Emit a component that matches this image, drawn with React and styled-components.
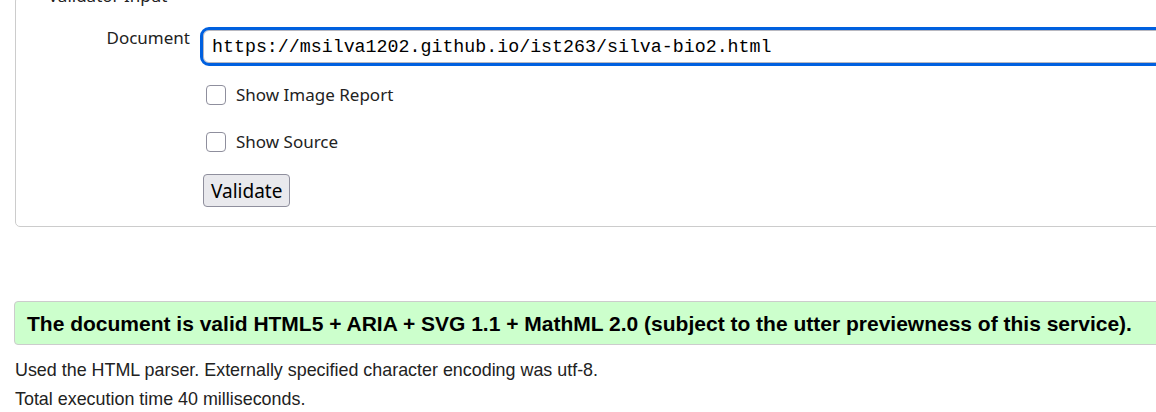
import React from 'react'
import styled, { createGlobalStyle } from 'styled-components'

const GlobalStyle = createGlobalStyle`
  html, body {
    margin: 0;
    padding: 0;
    background: #ffffff;
    overflow: hidden;
  }
`

const Page = styled.div`
  width: 1220px;
  padding-left: 15px;
  margin-top: -14px;
  font-family: 'Liberation Sans', Arial, sans-serif;
  color: #000;
`

const Fieldset = styled.fieldset`
  margin: 0;
  padding: 20px 0 19px 0;
  border: 1px solid #cccccc;
  border-radius: 5px;
`

const Legend = styled.legend`
  margin-left: 30px;
  padding: 0 2px;
  font-family: 'Noto Sans', 'Open Sans', sans-serif;
  font-size: 17px;
  line-height: 20px;
  color: #222;
`

const Row = styled.div`
  display: flex;
  align-items: flex-start;
  gap: 13px;
`

const Label = styled.label`
  width: 174px;
  text-align: right;
  font-family: 'Noto Sans', 'Open Sans', sans-serif;
  font-size: 17px;
  color: #222;
`

const Controls = styled.div`
  flex: 1;
  display: flex;
  flex-direction: column;
  align-items: flex-start;
`

const UrlInput = styled.input`
  box-sizing: border-box;
  width: 100%;
  height: 33px;
  margin-top: 4px;
  padding: 0 8px;
  border: 1px solid #b8b8c0;
  border-radius: 6px;
  outline: 3px solid #0060df;
  font-family: 'Liberation Mono', 'DejaVu Sans Mono', monospace;
  font-size: 18.3px;
  color: #000;
  background: #fff;
`

const CheckRow = styled.label`
  display: flex;
  align-items: center;
  gap: 10px;
  margin-left: 3px;
  margin-top: ${(p) => p.$top}px;
  font-family: 'Noto Sans', 'Open Sans', sans-serif;
  font-size: 17px;
  color: #222;
`

const Box = styled.span`
  display: inline-block;
  box-sizing: border-box;
  width: 20px;
  height: 20px;
  border: 1px solid #8f8f9d;
  border-radius: 4px;
  background: #fff;
`

const Button = styled.button`
  margin-top: 21px;
  height: 33px;
  padding: 0 7px;
  border: 1px solid #8f8f9d;
  border-radius: 4px;
  background: #e9e9ed;
  font-family: 'Noto Sans', 'Open Sans', sans-serif;
  font-size: 19px;
  color: #000;
`

const Success = styled.p`
  margin: 74px 0 0 -1px;
  padding: 10px 12px 8px 12px;
  border: 1px solid #cccccc;
  border-radius: 4px;
  background: #ccffcc;
  font-weight: bold;
  font-size: 21px;
`

const Info = styled.p`
  margin: ${(p) => p.$top}px 0 0 0;
  font-size: 17.9px;
  color: #222;
`

export default function App() {
  return (
    <>
      <GlobalStyle />
      <Page>
        <Fieldset>
          <Legend>Validator Input</Legend>
          <Row>
            <Label>Document</Label>
            <Controls>
              <UrlInput
                defaultValue="https://msilva1202.github.io/ist263/silva-bio2.html"
                readOnly
              />
              <CheckRow $top={20}>
                <Box />
                Show Image Report
              </CheckRow>
              <CheckRow $top={24}>
                <Box />
                Show Source
              </CheckRow>
              <Button>Validate</Button>
            </Controls>
          </Row>
        </Fieldset>
        <Success>
          The document is valid HTML5 + ARIA + SVG 1.1 + MathML 2.0 (subject to
          the utter previewness of this service).
        </Success>
        <Info $top={15}>
          Used the HTML parser. Externally specified character encoding was utf-8.
        </Info>
        <Info $top={8}>Total execution time 40 milliseconds.</Info>
      </Page>
    </>
  )
}
